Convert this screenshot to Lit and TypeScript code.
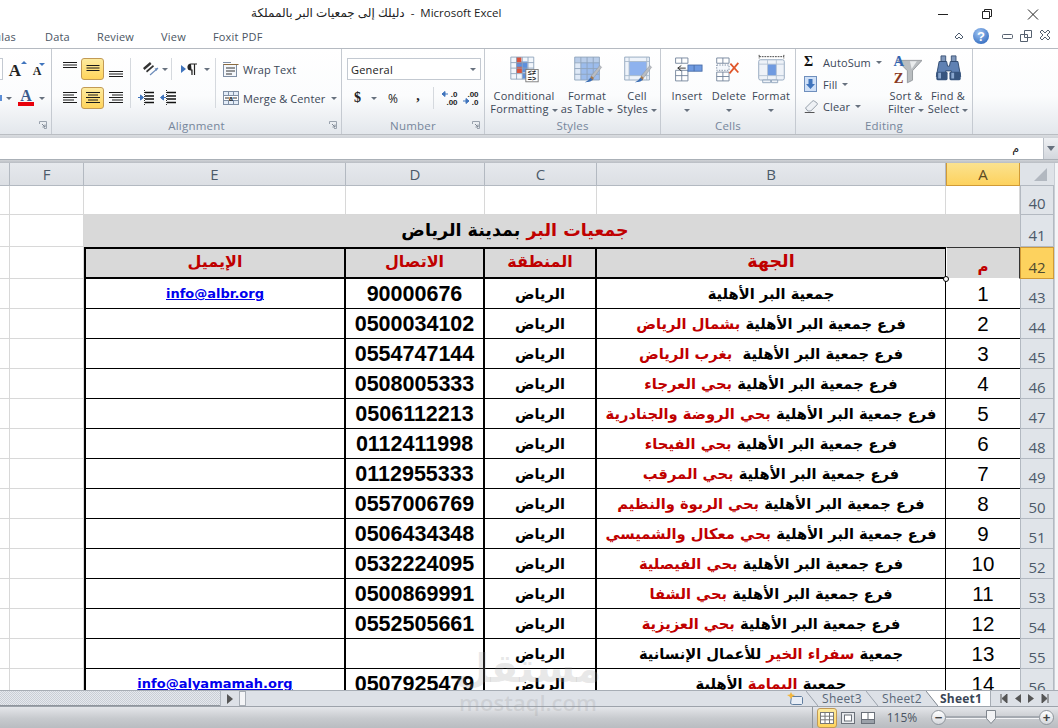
import { LitElement, html, css, svg } from "lit";
import { customElement } from "lit/decorators.js";

const RED = (t: string) => html`<span class="r">${t}</span>`;
const BASE = "فرع جمعية البر الأهلية ";
const rows: { n: number; name: any; phone: string; mail?: string }[] = [
  { n: 1, name: html`جمعية البر الأهلية`, phone: "90000676", mail: "info@albr.org" },
  { n: 2, name: html`${BASE}${RED("بشمال الرياض")}`, phone: "0500034102" },
  { n: 3, name: html`${BASE} ${RED("بغرب الرياض")}`, phone: "0554747144" },
  { n: 4, name: html`${BASE}${RED("بحي العرجاء")}`, phone: "0508005333" },
  { n: 5, name: html`${BASE}${RED("بحي الروضة والجنادرية")}`, phone: "0506112213" },
  { n: 6, name: html`${BASE}${RED("بحي الفيحاء")}`, phone: "0112411998" },
  { n: 7, name: html`${BASE}${RED("بحي المرقب")}`, phone: "0112955333" },
  { n: 8, name: html`${BASE}${RED("بحي الربوة والنظيم")}`, phone: "0557006769" },
  { n: 9, name: html`${BASE}${RED("بحي معكال والشميسي")}`, phone: "0506434348" },
  { n: 10, name: html`${BASE}${RED("بحي الفيصلية")}`, phone: "0532224095" },
  { n: 11, name: html`${BASE}${RED("بحي الشفا")}`, phone: "0500869991" },
  { n: 12, name: html`${BASE}${RED("بحي العزيزية")}`, phone: "0552505661" },
  { n: 13, name: html`جمعية ${RED("سفراء الخير")} للأعمال الإنسانية`, phone: "" },
  { n: 14, name: html`جمعية ${RED("اليمامة")} الأهلية`, phone: "0507925479", mail: "info@alyamamah.org" },
];

const lines = (w: number[], align: "l" | "c" | "r", y0 = 2, step = 3) => {
  return html`<svg width="16" height="16" viewBox="0 0 16 16">${w.map((l, i) => {
    const x = align === "l" ? 1 : align === "r" ? 15 - l : 8 - l / 2;
    return svg`<rect x="${x}" y="${y0 + i * step}" width="${l}" height="1" fill="#1a1a1a" />`;
  })}</svg>`;
};

const gridLines = (x: number, y: number, w: number, h: number, cols: number, rws: number, color = "#8ea3bb") => {
  const out: any[] = [];
  for (let i = 0; i <= cols; i++) {
    const p = x + (w * i) / cols;
    out.push(svg`<line x1="${p}" y1="${y}" x2="${p}" y2="${y + h}" stroke="${color}" />`);
  }
  for (let i = 0; i <= rws; i++) {
    const p = y + (h * i) / rws;
    out.push(svg`<line x1="${x}" y1="${p}" x2="${x + w}" y2="${p}" stroke="${color}" />`);
  }
  return out;
};

const brush = (dx: number) => svg`
  <path d="M${dx + 29} 13 l2 2 -9 12 -3 -2z" fill="#b8bcc2" stroke="#8a8f96" stroke-width=".5"/>
  <path d="M${dx + 19} 25 l3 2 -1 3 -3 -2z" fill="#a9794a"/>
  <path d="M${dx + 18} 27 l3 2 c-2 3 -6 3 -9 3 c3 -1 5 -3 6 -5z" fill="#3c6fb5"/>`;

const icons = {
  cond: html`<svg viewBox="0 0 34 34">
    <rect x="1.5" y="3.5" width="26" height="25" fill="#f2f6fb"/>
    <rect x="7.5" y="8.5" width="13" height="12" fill="#5d8fdc"/>
    <rect x="7.5" y="3.5" width="6" height="7" fill="#d9533c"/>
    <rect x="7.5" y="14.5" width="7" height="7" fill="#d9533c"/>
    <rect x="14.5" y="21" width="6" height="7" fill="#5d8fdc"/>
    ${gridLines(1.5, 3.5, 26, 25, 4, 4)}
    <rect x="18.5" y="17.5" width="14" height="14" fill="#fff" stroke="#777"/>
    <text x="25.5" y="24" font-size="8" font-weight="700" text-anchor="middle" fill="#222" font-family="Liberation Sans">≤≠</text>
    <text x="25.5" y="30.5" font-size="8" font-weight="700" text-anchor="middle" fill="#222" font-family="Liberation Sans">=&gt;</text>
  </svg>`,
  table: html`<svg viewBox="0 0 34 34">
    <rect x="2.5" y="3.5" width="28" height="26" fill="#dfe9f7"/>
    <rect x="2.5" y="3.5" width="28" height="6" fill="#b9cde9"/>
    <rect x="9.5" y="9.5" width="21" height="20" fill="#9cbcec"/>
    ${gridLines(2.5, 3.5, 28, 26, 4, 4, "#8ea3bb")}${brush(2)}
  </svg>`,
  cell: html`<svg viewBox="0 0 34 34">
    <rect x="2.5" y="3.5" width="28" height="26" fill="#eef3fa"/>
    <rect x="7.5" y="8.5" width="20" height="16" fill="#8eb2ee"/>
    ${gridLines(2.5, 3.5, 28, 26, 1, 1, "#8ea3bb")}
    <path d="M7.5 3.5v26M2.5 8.5h28M2.5 24.5h28M27.5 3.5v26" stroke="#a9b8ca" fill="none"/>${brush(2)}
  </svg>`,
  insert: html`<svg viewBox="0 0 34 34">
    <path d="M3.5 4.5h14v6h-14z M10.5 4.5v6" fill="#fff" stroke="#6f8199"/>
    <path d="M3.5 20.5h14v12h-14z M10.5 20.5v12 M3.5 26.5h14" fill="#fff" stroke="#6f8199" transform="translate(0,-2)"/>
    <rect x="17.5" y="12.5" width="16" height="7" fill="#6f9ae0" stroke="#4a6ea8"/>
    <path d="M6 16h9M6 16l4-3M6 16l4 3" stroke="#222" fill="none"/>
    <path d="M24.5 12.5v7" stroke="#4a6ea8"/>
  </svg>`,
  del: html`<svg viewBox="0 0 34 34">
    <path d="M2.5 4.5h14v6h-14z M9.5 4.5v6" fill="#fff" stroke="#6f8199"/>
    <rect x="2.5" y="12.5" width="14" height="6" fill="#f5f8fc" stroke="#6f8199" stroke-dasharray="1.5 1.5"/>
    <path d="M2.5 20.5h14v10h-14z M9.5 20.5v10 M2.5 25.5h14" fill="#fff" stroke="#6f8199"/>
    <path d="M18 11l9 10M27 10l-10 12" stroke="#e0572b" stroke-width="2" fill="none"/>
  </svg>`,
  fmt: html`<svg viewBox="0 0 34 34">
    <path d="M3 3h28M3 1v4M31 1v4" stroke="#333" fill="none" stroke-dasharray="2 1"/>
    <rect x="2.5" y="6.5" width="29" height="23" rx="2" fill="#eef2f8" stroke="#8ea3bb"/>
    <rect x="12.5" y="11.5" width="10" height="13" fill="#6f9ae0"/>
    <path d="M12.5 6.5v23M22.5 6.5v23M2.5 11.5h29M2.5 24.5h29" stroke="#b4c2d3" fill="none"/>
    <path d="M7 29.5h9v3h-9zM17 29.5h7v3h-7z" fill="#eef2f8" stroke="#8ea3bb"/>
  </svg>`,
  sort: html`<svg viewBox="0 0 36 34">
    <path d="M7 7h29l-11 12v11l-6 3v-14z" fill="#b9bdc0" stroke="#8f9498"/>
    <path d="M22 8h8l-6 9z" fill="#e9ebec"/>
    <text x="9" y="14" font-size="17" font-weight="700" font-family="Liberation Serif" text-anchor="middle" fill="#3465b0">A</text>
    <text x="9" y="33" font-size="17" font-weight="700" font-family="Liberation Serif" text-anchor="middle" fill="#8a3a24">Z</text>
  </svg>`,
  find: html`<svg viewBox="0 0 30 32">
    <path d="M7 2h5v6h-5zM18 2h5v6h-5z" fill="#7f97ba" stroke="#3c5478"/>
    <path d="M5 8h8l1 5h2l1-5h8l3 16h-10v-6h-6v6h-10z" fill="#5f81b3" stroke="#2f4a70"/>
    <rect x="2" y="19" width="12" height="9" rx="1.5" fill="#37557f"/>
    <rect x="16" y="19" width="12" height="9" rx="1.5" fill="#37557f"/>
    <path d="M4 20h3v6h-3zM18 20h3v6h-3z" fill="#8aa7cf"/>
  </svg>`,
  wrap: html`<svg width="16" height="16" viewBox="0 0 16 16">
    <rect x=".5" y="3.5" width="13" height="12" fill="#f4f7fb" stroke="#7f8fa5"/>
    <path d="M.5 3.5h15" stroke="#8c6b3f"/>
    <path d="M3 7h9M3 10h9M3 13h6" stroke="#333"/>
    <path d="M0 1.500h8" stroke="#7f8fa5"/>
  </svg>`,
  merge: html`<svg width="16" height="16" viewBox="0 0 16 16">
    <rect x=".5" y="1.5" width="15" height="13" fill="#e4edf8" stroke="#7f8fa5"/>
    <path d="M.5 5.500h15M.5 10.500h15M5.500 1.500v4M10.500 1.500v4M5.500 10.500v4M10.500 10.500v4" stroke="#7f8fa5"/>
    <rect x="1" y="6" width="14" height="4" fill="#fff"/>
    <path d="M2 8h4M10 8h4" stroke="#333"/>
    <text x="8" y="10.500" font-size="7" font-weight="700" text-anchor="middle" fill="#222" font-family="Liberation Sans">a</text>
  </svg>`,
  orient: html`<svg width="20" height="18" viewBox="0 0 20 18">
    <path d="M2 8l7-6 1.500 2-7 6zM5 11l7-6 1 1.500-7 6z" fill="#333"/>
    <path d="M9 15l8-7" stroke="#6c8cba" stroke-width="1.200"/>
    <path d="M17 8l-3.500.5 2 2.500z" fill="#6c8cba"/>
  </svg>`,
  rtl: html`<svg width="18" height="14" viewBox="0 0 18 14">
    <path d="M1 3l5 4-5 4z" fill="#3f74bd"/>
    <path d="M11 2h6M11 2a3 3 0 0 0 0 6h1v5M14.500 2v11" stroke="#222" fill="#222" stroke-width="1.200"/>
  </svg>`,
  indL: html`<svg width="18" height="16" viewBox="0 0 18 16">
    <path d="M8 2.500h9M8 6h9M8 9h9M8 12.500h9" stroke="#111" stroke-width="1.300"/>
    <path d="M1 7.500h5M6.500 7.500l-3-2.500v5z" fill="#3f74bd" stroke="#3f74bd"/>
    <path d="M7.500 0v16" stroke="#333" stroke-dasharray="1 1"/>
  </svg>`,
  indR: html`<svg width="18" height="16" viewBox="0 0 18 16">
    <path d="M8 2.500h9M8 6h9M8 9h9M8 12.500h9" stroke="#111" stroke-width="1.300"/>
    <path d="M7 7.500h-5M1.500 7.500l3-2.500v5z" fill="#3f74bd" stroke="#3f74bd"/>
    <path d="M7.500 0v16" stroke="#333" stroke-dasharray="1 1"/>
  </svg>`,
  dec1: html`<svg width="18" height="16" viewBox="0 0 18 16"><path d="M1 4h6M1 4l3-2.500v5z" stroke="#3f74bd" fill="#3f74bd"/><text x="13" y="7" font-size="8" font-weight="700" text-anchor="middle" fill="#222" font-family="Liberation Sans">.0</text><text x="11" y="15" font-size="8" font-weight="700" text-anchor="middle" fill="#222" font-family="Liberation Sans">.00</text></svg>`,
  dec2: html`<svg width="18" height="16" viewBox="0 0 18 16"><path d="M1 11h6M7 11l-3-2.500v5z" stroke="#3f74bd" fill="#3f74bd"/><text x="11" y="7" font-size="8" font-weight="700" text-anchor="middle" fill="#222" font-family="Liberation Sans">.00</text><text x="13" y="15" font-size="8" font-weight="700" text-anchor="middle" fill="#222" font-family="Liberation Sans">.0</text></svg>`,
  launch: html`<svg width="8" height="8" viewBox="0 0 8 8"><path d="M.5 3V.5H7.500V7.500H5" fill="none" stroke="#9aa3ae"/><path d="M3 3l3 3M6 3.500V6H3.500" fill="none" stroke="#7e8793"/></svg>`,
  fill: html`<svg width="13" height="16" viewBox="0 0 13 16"><rect x=".5" y=".5" width="12" height="15" fill="#cfe0f7" stroke="#6f8fbd"/><path d="M4.500 3h4v5h2.500l-4.500 5-4.500-5h2.500z" fill="#3f74bd"/></svg>`,
  eraser: html`<svg width="15" height="15" viewBox="0 0 20 18"><path d="M2 11l9-9c1-1 2-1 3 0l3 2c1 1 1 2 0 3l-8 8h-4z" fill="#eef1f5" stroke="#76828f"/><path d="M1 17h13" stroke="#222"/></svg>`,
};

@customElement("app-root")
export class AppRoot extends LitElement {
  static styles = css`
    :host { display: block; width: 1058px; height: 728px; overflow: hidden; position: relative; background: #fff;
      font-family: "Open Sans", "DejaVu Sans", sans-serif; font-size: 11px; color: #3b4757; }
    .app { display: flex; flex-direction: column; height: 728px; }
    .titlebar { height: 24px; display: flex; align-items: center; flex: none; color: #222; padding-left: 251px; }
    .ttl { width: 690px; white-space: pre; font-size: 11.500px; }
    .ttl .ar { font-size: 12px; }
    .wc { display: flex; align-items: center; width: 117px; margin-left: -3px; }
    .wc svg { display: block; }
    .tabs { height: 24px; flex: none; display: flex; align-items: center; gap: 27px; letter-spacing: .2px; color: #4a5563; }
    .clipl { width: 16px; display: flex; justify-content: flex-end; overflow: hidden; }
    .tabright { margin-left: auto; display: flex; align-items: center; gap: 5px; padding-right: 6px; }
    .ribbon { height: 85px; flex: none; display: flex; border-top: 1px solid #b5bac1; background: linear-gradient(#ffffff 0%, #fbfcfd 55%, #e3e7ec 100%); }
    .group { flex: none; position: relative; display: flex; flex-direction: column; border-right: 1px solid #c5cad1; box-sizing: border-box; }
    .body { height: 67px; flex: none; display: flex; }
    .label { flex: 1; position: relative; text-align: center; color: #76869b; font-size: 11.500px; line-height: 19px; letter-spacing: .2px; }
    .launch { position: absolute; right: 4px; top: 5px; display: flex; }
    .rows { display: grid; grid-template-rows: 22px 22px; row-gap: 7px; padding-top: 9px; }
    .row { display: flex; align-items: center; }
    .ib { flex: none; display: flex; align-items: center; justify-content: center; height: 22px; box-sizing: border-box; }
    .w23 { width: 23px; }
    .on { background: linear-gradient(#fdeb9f, #ffd45c); border: 1px solid #c29a55; border-radius: 3px; }
    .sep { width: 1px; align-self: stretch; background: #d5d9de; flex: none; }
    .sep2 { width: 1px; height: 22px; background: #d5d9de; flex: none; }
    .caret { display: inline-block; width: 0; height: 0; border: 3px solid transparent; border-top: 3.500px solid #67717e; border-bottom: 0; flex: none; vertical-align: middle; }
    .big { flex: none; display: flex; flex-direction: column; align-items: center; line-height: 13px; white-space: nowrap; letter-spacing: .2px; }
    .bigi { height: 39px; padding-top: 5px; box-sizing: border-box; display: flex; align-items: flex-start; justify-content: center; }
    .bigi svg { width: 31px; height: 30px; display: block; }
    .big .tx { padding-top: 1px; }
    .big .caret { margin-left: 3px; }
    .small { display: flex; align-items: center; gap: 4px; letter-spacing: .1px; white-space: nowrap; }
    .ico { width: 17px; display: flex; justify-content: flex-start; flex: none; }
    .combo { width: 134px; height: 22px; box-sizing: border-box; margin-left: 5px; border: 1px solid #c3c9d1; background: #fff; display: flex; align-items: center; justify-content: space-between; padding: 0 4px 0 3px; color: #222; letter-spacing: .2px; }
    .dollar { width: 31px; justify-content: flex-start; gap: 10px; font: 700 14px "Liberation Serif", serif; color: #222; }
    .pctb { width: 20px; font: 12px "Open Sans", sans-serif; color: #222; margin-left: -2px; }
    .comma { width: 30px; font: 700 14px "Liberation Serif", serif; color: #222; padding-bottom: 4px; }
    .gap4 { height: 4px; flex: none; background: linear-gradient(#a4a8ae, #d9dce0 30%, #cfd2d7); }
    .gap4b { height: 4px; flex: none; background: linear-gradient(#cfd2d6, #b9bdc3); border-top: 1px solid #aab0b7; box-sizing: border-box; }
    .formula { height: 21px; flex: none; background: #fff; display: flex; align-items: center; justify-content: flex-end; font-size: 11px; color: #111; font-family: "DejaVu Sans", sans-serif; }
    .fx { margin-right: 24px; }
    .fdrop { width: 15px; height: 21px; box-sizing: border-box; background: linear-gradient(#eef0f3, #d3d7dd); border-left: 1px solid #b9bfc7; display: flex; align-items: center; justify-content: center; }
    .fdrop .caret { border-width: 4px; border-top-width: 5px; border-bottom: 0; }
    .sheet { height: 527px; flex: none; overflow: hidden; display: grid;
      grid-template-columns: 10px 74px 262px 139px 112px 349px 74px 34px 4px;
      grid-template-rows: 23px 29px 32px 32px repeat(14, 30px); position: relative; background: #fff;
      font-family: "Liberation Sans", "DejaVu Sans", sans-serif; color: #000; }
    .c { box-sizing: border-box; display: flex; align-items: center; justify-content: center; overflow: hidden; white-space: pre; min-width: 0; }
    .g { border-right: 1px solid #d8d8d8; border-bottom: 1px solid #d8d8d8; }
    .ch { background: linear-gradient(#e6e9ed, #dcdfe4); border-right: 1px solid #b3b9c1; border-bottom: 1px solid #b3b9c1; font: 15px "Open Sans", sans-serif; color: #4c5a69; }
    .ch.sel { background: linear-gradient(#fbe28f, #fdd25e); color: #5b4a24; border: 1px solid #d09a36; border-top: 0; }
    .corner { background: #dfe3e8; border-bottom: 1px solid #b3b9c1; align-items: flex-end; justify-content: flex-end; padding: 0 7px 4px 0; }
    .tri { width: 0; height: 0; border-style: solid; border-width: 0 0 13px 13px; border-color: transparent transparent #b2b8c0 transparent; }
    .rh { background: #e0e4e9; border-bottom: 1px solid #b3b9c1; border-left: 1px solid #b3b9c1; border-right: 1px solid #b3b9c1; font: 15px "Open Sans", sans-serif; color: #4c5a69; align-items: flex-end; padding-bottom: 1px; }
    .rh.sel { background: #fdd25e; border: 1px solid #d09a36; color: #4f4a2e; }
    .edge { grid-column: 9; grid-row: 1 / -1; background: #f4f5f7; border-left: 1px solid #c9ced5; box-sizing: border-box; }
    .gray { background: #d9d9d9; }
    .titleCell { grid-column: 3 / span 4; font-weight: 700; font-size: 17.500px; font-family: "DejaVu Sans", sans-serif; padding-bottom: 3px; }
    .r { color: #c00000; }
    .hd { font: 700 16px "DejaVu Sans", sans-serif; color: #c00000; border-top: 2px solid #000; border-bottom: 2px solid #000; border-right: 2px solid #000; padding-bottom: 4px; }
    .hd.e { border-left: 2px solid #000; }
    .hd.b { border-right: 1px solid #000; font-size: 17.500px; }
    .aHd { background: #d9d9d9; color: #c00000; font: 700 15px "DejaVu Sans", sans-serif; align-items: flex-end; padding-bottom: 2px;
      border: 1px solid #333; border-left: 1px solid #fff; border-bottom: 1px solid #fff; }
    .d { border-bottom: 1px solid #000; border-right: 2px solid #000; }
    .d.e { border-left: 2px solid #000; }
    .d.b { border-right: 1px solid #000; }
    .d.a { border-right: 0; font-size: 20.500px; }
    .phone { font-weight: 700; font-size: 21.500px; padding-top: 2px; }
    .region { font: 700 14.500px "DejaVu Sans", sans-serif; }
    .name { font: 700 14.700px "DejaVu Sans", sans-serif; }
    .mail { font: 700 13px "DejaVu Sans", sans-serif; color: #0000ee; text-decoration: underline; }
    .handle { position: absolute; left: 943px; top: 113px; width: 6px; height: 6px; box-sizing: border-box; background: #fff; border: 1px solid #000; border-radius: 50%; }
    .hbar { height: 17px; flex: none; box-sizing: border-box; border-top: 1px solid #a7adb5; border-bottom: 1px solid #9da3ab; background: #dde1e7; display: flex; align-items: stretch; }
    .track { width: 220px; background: repeating-conic-gradient(#c9ced6 0 25%, #e6e9ee 0 50%) 0 0 / 2px 2px; border-right: 1px solid #b0b6be; box-shadow: inset 0 -1px 0 #8f959d; }
    .hbtn { width: 18px; display: flex; align-items: center; justify-content: center; }
    .arrowR { width: 0; height: 0; border: 5px solid transparent; border-left: 6px solid #555; border-right: 0; }
    .split { width: 7px; background: #f4f5f7; border: 1px solid #a7adb5; box-sizing: border-box; }
    .sheets { margin-left: auto; display: flex; align-items: stretch; color: #5a6777; font-size: 12px; letter-spacing: .2px; }
    .tb { display: flex; align-items: center; justify-content: center; box-sizing: border-box; }
    .tb.act { background: #fff; color: #3b4757; font-weight: 700; width: 52px; padding-right: 6px; }
    .sl { display: block; flex: none; }
    .nav { width: 68px; display: flex; align-items: center; justify-content: space-around; padding: 0 5px; box-sizing: border-box; border-left: 1px solid #a7adb5; }
    .status { height: 21px; flex: none; background: linear-gradient(#e4e6ea, #c7cace 55%, #b9bcc1); display: flex; align-items: center; justify-content: flex-end; color: #4a5563; }
    .vsep { width: 1px; height: 21px; background: #8f959c; margin-right: 4px; }
    .vb { width: 20px; height: 20px; display: flex; align-items: center; justify-content: center; box-sizing: border-box; }
    .pct { width: 42px; text-align: center; font-size: 12px; margin-left: 3px; }
    .zb { width: 15px; height: 15px; border-radius: 50%; box-sizing: border-box; border: 1px solid #8f959c; background: linear-gradient(#fff, #d5d8dd); display: flex; align-items: center; justify-content: center; font: 700 13px/1 "Liberation Sans", sans-serif; color: #444; flex: none; }
    .slider { width: 93px; height: 2px; background: #a4a9b0; display: flex; justify-content: flex-start; align-items: center; border-bottom: 1px solid #f2f3f5; }
    .thumb { margin-left: 40px; display: block; flex: none; }
    .wm { position: absolute; left: 463px; top: 646px; width: 130px; height: 70px; pointer-events: none; display: flex; flex-direction: column; align-items: center; color: rgba(150, 150, 150, .22); line-height: 1; }
    .wm1 { font: 700 40px/44px "DejaVu Sans", sans-serif; white-space: nowrap; }
    .wm2 { font: 600 22px/24px "Open Sans", sans-serif; white-space: nowrap; }
  `;

  private big(icon: any, l1: string, l2: string | null, w: number) {
    return html`<div class="big" style="width:${w}px"><div class="bigi">${icon}</div>
      <div class="tx">${l1}</div>
      <div class="tx" style="padding-top:0">${l2 ?? ""}<span class="caret" style=${l2 ? "" : "margin-left:0"}></span></div></div>`;
  }

  render() {
    return html`
    <div class="app">
      <div class="titlebar">
        <div class="ttl"><span class="ar" dir="rtl">دليلك إلى جمعيات البر بالمملكة</span>  -  Microsoft Excel</div>
        <div class="wc">
          <svg width="117" height="24" viewBox="0 0 117 24">
            <path d="M0 14.500h10" stroke="#222"/>
            <path d="M44.500 11.500h7v7h-7zM46.500 11.500v-2h7v7h-2" fill="none" stroke="#222"/>
            <path d="M90 9.500l10 10M100 9.500l-10 10" stroke="#222" fill="none"/>
          </svg>
        </div>
      </div>
      <div class="tabs">
        <div class="clipl"><span>Formulas</span></div><span style="margin-left:2px">Data</span><span>Review</span><span>View</span><span>Foxit PDF</span>
        <div class="tabright">
          <svg width="12" height="12" viewBox="0 0 12 12" style="margin-right:2px"><path d="M2 7l4-4 4 4-2 2-2-2-2 2z" fill="none" stroke="#4b5a6e"/></svg>
          <svg width="18" height="18" viewBox="0 0 18 18" style="margin-right:5px"><defs><radialGradient id="h" cx=".4" cy=".3" r=".8"><stop offset="0" stop-color="#9fc4f2"/><stop offset="1" stop-color="#2f68bd"/></radialGradient></defs><circle cx="9" cy="9" r="8" fill="url(#h)"/><text x="9" y="13.500" font-size="13" font-weight="700" text-anchor="middle" fill="#fff" font-family="Liberation Sans">?</text></svg>
          <svg width="14" height="12" viewBox="0 0 14 12"><rect x="2.500" y="4.500" width="10" height="4" rx="1" fill="#fff" stroke="#55606f"/></svg>
          <svg width="14" height="14" viewBox="0 0 14 14"><path d="M5.500 1.500h7v7h-7zM1.500 5.500h7v7h-7z" fill="#fff" stroke="#55606f"/></svg>
          <svg width="14" height="14" viewBox="0 0 14 14"><path d="M2 3l2-2 3 3 3-3 2 2-3 3 3 3-2 2-3-3-3 3-2-2 3-3z" fill="#fff" stroke="#55606f"/></svg>
        </div>
      </div>

      <div class="ribbon">
        <div class="group" style="width:52px">
          <div class="body"><div class="rows">
            <div class="row">
              <div style="width:3px;height:22px;border:1px solid #c3c9d1;border-left:0;background:#fff;box-sizing:border-box"></div>
              <svg style="margin-left:2px" width="22" height="22" viewBox="0 0 22 22"><text x="10" y="18" font-size="17" font-weight="700" text-anchor="middle" fill="#222" font-family="Liberation Serif">A</text><path d="M16 6l3-3 3 3z" fill="#3f74bd"/></svg>
              <svg style="margin-left:3px" width="18" height="22" viewBox="0 0 18 22"><text x="7" y="17" font-size="12" font-weight="700" text-anchor="middle" fill="#222" font-family="Liberation Serif">A</text><path d="M9 5h6l-3 3z" fill="#3f74bd"/></svg>
            </div>
            <div class="row">
              <div style="width:2px;height:6px;background:#5c8ed6"></div>
              <span class="caret" style="margin-left:4px"></span>
              <svg style="margin-left:5px" width="18" height="22" viewBox="0 0 18 22"><text x="9" y="14" font-size="16" font-weight="700" text-anchor="middle" fill="#3a5a8c" font-family="Liberation Serif">A</text><rect x="1" y="15" width="16" height="4" fill="#e8000b"/></svg>
              <span class="caret" style="margin-left:4px"></span>
            </div>
          </div></div>
          <div class="label"><span class="launch">${icons.launch}</span></div>
        </div>

        <div class="group" style="width:290px">
          <div class="body">
            <div class="rows" style="padding-left:6px">
              <div class="row">
                <div class="ib w23">${lines([14, 14, 14], "c", 1, 2.5)}</div>
                <div class="ib w23 on">${lines([13, 13, 13], "c", 4, 2.5)}</div>
                <div class="ib w23" style="padding-top:8px">${lines([14, 14, 14], "c", 6, 2.5)}</div>
              </div>
              <div class="row">
                <div class="ib w23">${lines([14, 11, 14, 11, 14], "l", 2, 2.5)}</div>
                <div class="ib w23 on">${lines([14, 10, 14, 10, 14], "c", 2, 2.5)}</div>
                <div class="ib w23">${lines([14, 11, 14, 11, 14], "r", 2, 2.5)}</div>
              </div>
            </div>
            <div class="sep" style="margin:9px 0 8px 3px"></div>
            <div class="rows" style="width:84px">
              <div class="row">
                <div class="ib" style="width:40px;gap:1px;padding-left:7px">${icons.orient}<span class="caret"></span></div>
                <div class="sep2"></div>
                <div class="ib" style="width:43px;justify-content:flex-start;padding-left:8px;gap:6px">${icons.rtl}<span class="caret"></span></div>
              </div>
              <div class="row" style="padding-left:6px;gap:4px">
                <div class="ib">${icons.indL}</div><div class="ib">${icons.indR}</div>
              </div>
            </div>
            <div class="sep" style="margin:9px 0 8px 0"></div>
            <div class="rows" style="padding-left:7px">
              <div class="row small">${icons.wrap}<span>Wrap Text</span></div>
              <div class="row small">${icons.merge}<span>Merge &amp; Center</span><span class="caret" style="margin-left:2px"></span></div>
            </div>
          </div>
          <div class="label">Alignment<span class="launch">${icons.launch}</span></div>
        </div>

        <div class="group" style="width:143px">
          <div class="body">
            <div class="rows">
              <div class="row"><div class="combo"><span>General</span><span class="caret"></span></div></div>
              <div class="row" style="padding-left:12px">
                <div class="ib dollar">$<span class="caret"></span></div>
                <div class="ib pctb">%</div>
                <div class="ib comma">,</div>
                <div class="sep2"></div>
                <div class="ib" style="margin-left:7px">${icons.dec1}</div>
                <div class="ib" style="margin-left:3px">${icons.dec2}</div>
              </div>
            </div>
          </div>
          <div class="label">Number<span class="launch">${icons.launch}</span></div>
        </div>

        <div class="group" style="width:176px">
          <div class="body" style="padding-left:5px">
            ${this.big(icons.cond, "Conditional", "Formatting", 68)}
            ${this.big(icons.table, "Format", "as Table", 58)}
            ${this.big(icons.cell, "Cell", "Styles", 42)}
          </div>
          <div class="label">Styles</div>
        </div>

        <div class="group" style="width:135px">
          <div class="body" style="padding-left:5px">
            ${this.big(icons.insert, "Insert", null, 42)}
            ${this.big(icons.del, "Delete", null, 42)}
            ${this.big(icons.fmt, "Format", null, 42)}
          </div>
          <div class="label">Cells</div>
        </div>

        <div class="group" style="width:177px">
          <div class="body">
            <div style="width:91px;padding:2px 0 0 8px;box-sizing:border-box;display:grid;grid-template-rows:22px 22px 22px">
              <div class="row small" style="gap:2px"><span class="ico" style="font:700 14px 'Liberation Serif';color:#111">Σ</span><span>AutoSum</span><span class="caret" style="margin-left:3px"></span></div>
              <div class="row small" style="gap:2px"><span class="ico">${icons.fill}</span><span>Fill</span><span class="caret" style="margin-left:3px"></span></div>
              <div class="row small" style="gap:2px"><span class="ico">${icons.eraser}</span><span>Clear</span><span class="caret" style="margin-left:3px"></span></div>
            </div>
            <div style="margin-left:-2px;display:flex">
              ${this.big(icons.sort, "Sort &", "Filter", 42)}
              ${this.big(icons.find, "Find &", "Select", 42)}
            </div>
          </div>
          <div class="label">Editing</div>
        </div>
      </div>

      <div class="gap4"></div>
      <div class="formula"><span class="fx">م</span><div class="fdrop"><span class="caret"></span></div></div>
      <div class="gap4b"></div>

      <div class="sheet">
        <div class="c ch"></div><div class="c ch">F</div><div class="c ch">E</div><div class="c ch">D</div><div class="c ch">C</div><div class="c ch">B</div><div class="c ch sel">A</div>
        <div class="c corner"><span class="tri"></span></div>
        <div class="edge"></div>

        <div class="c g"></div><div class="c g"></div><div class="c g"></div><div class="c g"></div><div class="c g"></div><div class="c g"></div><div class="c g"></div><div class="c rh">40</div>

        <div class="c g"></div><div class="c g"></div>
        <div class="c gray titleCell" dir="rtl"><span><span class="r">جمعيات البر</span> بمدينة الرياض</span></div>
        <div class="c gray"></div>
        <div class="c rh">41</div>

        <div class="c g"></div><div class="c g"></div>
        <div class="c gray hd e" dir="rtl">الإيميل</div>
        <div class="c gray hd" dir="rtl">الاتصال</div>
        <div class="c gray hd" dir="rtl">المنطقة</div>
        <div class="c gray hd b" dir="rtl">الجهة</div>
        <div class="c aHd" dir="rtl">م</div>
        <div class="c rh sel">42</div>

        ${rows.map((x, i) => html`
          <div class="c g"></div><div class="c g"></div>
          <div class="c d e">${x.mail ? html`<span class="mail">${x.mail}</span>` : ""}</div>
          <div class="c d phone">${x.phone}</div>
          <div class="c d region" dir="rtl">الرياض</div>
          <div class="c d b name" dir="rtl"><span>${x.name}</span></div>
          <div class="c d a">${x.n}</div>
          <div class="c rh">${43 + i}</div>
        `)}
        <span class="handle"></span>
      </div>

      <div class="hbar">
        <div class="track"></div>
        <div class="hbtn"><span class="arrowR"></span></div>
        <div class="split"></div>
        <div class="sheets">
          <div class="tb" style="width:22px">
            <svg width="18" height="14" viewBox="0 0 18 14"><path d="M5.500 4.500h10l1 1v6l-1 1h-9l-2-1z" fill="#e8eef6" stroke="#5f7d9f"/><path d="M5 0l1.200 2.500L9 3 6.500 4.500 5 7 3.500 4.500 1 3l2.800-.5z" fill="#f3b63c"/></svg>
          </div>
          <svg class="sl" width="12" height="15" viewBox="0 0 12 15"><path d="M0 0l12 15" stroke="#9aa2ac" fill="none"/></svg>
          <div class="tb" style="width:48px">Sheet3</div>
          <svg class="sl" width="12" height="15" viewBox="0 0 12 15"><path d="M0 0l12 15" stroke="#9aa2ac" fill="none"/></svg>
          <div class="tb" style="width:48px">Sheet2</div>
          <svg class="sl" width="12" height="15" viewBox="0 0 12 15"><path d="M12 0v15L0 0z" fill="#fff"/><path d="M0 0l12 15" stroke="#7f8791" fill="none"/></svg>
          <div class="tb act">Sheet1</div>
        </div>
        <div class="nav">
          <svg width="8" height="9" viewBox="0 0 8 9"><path d="M1 0v9M7 0v9L2 4.500z" stroke="#555" stroke-width="1" fill="#555"/></svg>
          <svg width="6" height="9" viewBox="0 0 6 9"><path d="M6 0v9L0 4.500z" fill="#555"/></svg>
          <svg width="6" height="9" viewBox="0 0 6 9"><path d="M0 0v9l6-4.500z" fill="#555"/></svg>
          <svg width="8" height="9" viewBox="0 0 8 9"><path d="M7 0v9M1 0v9l5-4.500z" stroke="#555" stroke-width="1" fill="#555"/></svg>
        </div>
      </div>

      <div class="status">
        <div class="vsep"></div>
        <div class="vb on"><svg width="14" height="12" viewBox="0 0 14 12"><rect x=".5" y=".5" width="13" height="11" fill="#fff" stroke="#777"/><path d="M.5 4.200h13M.5 7.800h13M5 .5v11M9.500 .5v11" stroke="#777"/></svg></div>
        <div class="vb" style="margin-left:1px"><svg width="14" height="12" viewBox="0 0 14 12"><rect x=".5" y=".5" width="13" height="11" fill="#e8eaed" stroke="#6a7079"/><rect x="3.500" y="3" width="7" height="6" fill="#fff" stroke="#6a7079"/></svg></div>
        <div class="vb"><svg width="14" height="12" viewBox="0 0 14 12"><rect x=".5" y=".5" width="13" height="11" fill="#fff" stroke="#6a7079"/><path d="M7 .5v7h7M.5 7.500h6.500" fill="none" stroke="#6a7079"/><rect x="1" y="8" width="12" height="3" fill="#9ba1a9"/></svg></div>
        <div class="pct">115%</div>
        <div class="zb" style="margin-left:8px">−</div>
        <div class="slider"><svg class="thumb" width="10" height="14" viewBox="0 0 10 14"><path d="M.5 .5h9v8l-4.500 5-4.500-5z" fill="#f2f3f5" stroke="#7f858d"/></svg></div>
        <div class="zb" style="margin-right:4px">+</div>
      </div>
    </div>
    <div class="wm" aria-hidden="true"><span class="wm1" dir="rtl">مستقل</span><span class="wm2">mostaql.com</span></div>
    `;
  }
}
